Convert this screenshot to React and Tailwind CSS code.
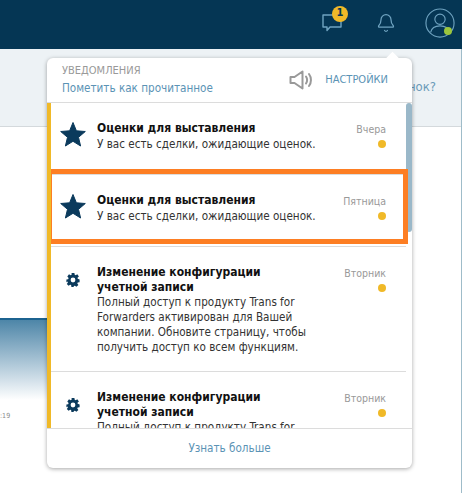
import { Bell } from 'lucide-react';

const items = [
  { id: 1, kind: 'star', title: 'Оценки для выставления', body: 'У вас есть сделки, ожидающие оценок.', date: 'Вчера' },
  { id: 2, kind: 'star', title: 'Оценки для выставления', body: 'У вас есть сделки, ожидающие оценок.', date: 'Пятница' },
  {
    id: 3,
    kind: 'gear',
    title: 'Изменение конфигурации учетной записи',
    body: 'Полный доступ к продукту Trans for Forwarders активирован для Вашей компании. Обновите страницу, чтобы получить доступ ко всем функциям.',
    date: 'Вторник',
  },
  {
    id: 4,
    kind: 'gear',
    title: 'Изменение конфигурации учетной записи',
    body: 'Полный доступ к продукту Trans for Forwarders активирован для Вашей компании. Обновите страницу, чтобы получить доступ ко всем функциям.',
    date: 'Вторник',
  },
];

const StarIcon = () => (
  <svg viewBox="0 0 26 25" className="h-[25px] w-[26px]">
    <path d="M13 0.5l3.4 8.3 8.9.7-6.8 5.8 2.1 8.7L13 19.3l-7.6 4.7 2.1-8.7L.7 9.5l8.9-.7z" fill="#0b3a5c" stroke="#0b3a5c" strokeLinejoin="round" />
  </svg>
);

const GearIcon = () => (
  <svg viewBox="0 0 14 14" className="h-[14px] w-[14px]">
    <path
      fillRule="evenodd"
      fill="#0b3a5c"
      d="M5.6 0h2.8l.3 1.8 1 .5L11.3 1.2l1.600 2.300-1.400 1.200.2 1.100L13.600 6.500v2.800l-1.900.2-.4 1 1.100 1.500-2 1.800-1.500-1.100-1 .4L7.600 14H5.400l-.3-1.900-1-.4-1.500 1.100-1.800-1.800 1.100-1.500-.4-1L.4 9.300V6.500l1.800-.3.4-1.100L1.300 3.500 3 1.300l1.600 1 1-.5zM7 4.600a2.400 2.400 0 1 0 0 4.800 2.400 2.400 0 0 0 0-4.800z"
    />
  </svg>
);

const NotificationRow = ({ item, last }) => (
  <div className={`flex pr-5 ${last ? '' : 'border-b border-[#dcdcdc]'} ${item.kind === 'star' ? 'h-[72px]' : 'h-[125px]'}`}>
    <div className={`flex w-[44px] shrink-0 justify-center ${item.kind === 'star' ? 'pt-[19px]' : 'pt-[26px]'}`}>
      {item.kind === 'star' ? <StarIcon /> : <GearIcon />}
    </div>
    <div className="ml-[2px] w-[222px] shrink-0 pt-[18px] text-[11.6px] leading-[15px] text-[#333]">
      <div className="max-w-[200px] text-[12px] font-bold text-[#111]">{item.title}</div>
      <div className={item.kind === 'star' ? 'mt-px' : ''}>{item.body}</div>
    </div>
    <div className="flex flex-1 flex-col items-end pt-[19px] text-[10.5px] leading-[15px] text-[#999]">
      <span>{item.date}</span>
      <span className="mt-[3px] h-2 w-2 rounded-full bg-[#f0b928]" />
    </div>
  </div>
);

export default function App() {
  return (
    <div className="relative h-[493px] w-[462px] overflow-hidden bg-white font-['DejaVu_Sans_Condensed','DejaVu_Sans',sans-serif]">
      {/* Header */}
      <header className="flex h-[49px] items-center justify-end bg-[#053654] pb-[4px] pr-[7px]">
        <div className="relative mr-[34px]">
          <svg viewBox="0 0 20 18" className="h-[18px] w-5" fill="none" stroke="#6fa3c0" strokeWidth="1.4" strokeLinejoin="round">
            <path d="M1 1h18v12H8l-3 3.500V13H1z" />
          </svg>
          <span className="absolute -right-[6px] -top-[8px] flex h-4 w-4 items-center justify-center rounded-full bg-[#f0b928] text-[11px] font-bold text-[#053654]">
            1
          </span>
        </div>
        <Bell size={20} strokeWidth={1.5} className="mr-[29px] text-[#6fa3c0]" />
        <div className="relative">
          <svg viewBox="0 0 32 32" className="h-[30px] w-[30px]" fill="none" stroke="#6fa3c0" strokeWidth="1.2">
            <circle cx="16" cy="16" r="15" />
            <circle cx="16" cy="12" r="5.500" />
            <path d="M6 26c1-5 5-7 10-7s9 2 10 7" />
          </svg>
          <span className="absolute bottom-[3px] right-[3px] h-2 w-2 rounded-full bg-[#9bc53d]" />
        </div>
      </header>

      {/* Page behind the popup */}
      <div className="flex h-[78px] items-center justify-end border-b border-[#d4d9dc] bg-[#edf2f5] pb-[2px] pr-[26px] text-[13px] text-[#6a9ab8]">
        нок?
      </div>
      <div className="mt-[191px] h-[82px] w-[200px] border-t-2 border-[#1c6390] bg-gradient-to-b from-[#4d86a8] to-white" />
      <div className="mt-[12px] text-[7px] leading-[9px] text-[#888]">:19</div>
      <div className="absolute bottom-0 right-0 top-[49px] w-px bg-[#9fbcc9]" />

      {/* Popup */}
      <div className="absolute left-[47px] top-[58px] w-[365px] rounded-md bg-white shadow-[0_1px_4px_rgba(0,0,0,0.35)]">
        <div className="absolute -top-[4px] right-[14px] h-[11px] w-[11px] rotate-45 bg-white" />

        <div className="relative flex h-[45px] items-center border-b border-[#dcdcdc] pl-[15px] pr-[24px]">
          <div className="flex-1">
            <div className="text-[11px] leading-[14px] text-[#999]">УВЕДОМЛЕНИЯ</div>
            <div className="mt-[3px] text-[11.6px] leading-[15px] text-[#5b93b5]">Пометить как прочитанное</div>
          </div>
          <svg viewBox="0 0 24 20" className="mr-[12px] h-5 w-6" fill="none" stroke="#999" strokeWidth="2" strokeLinejoin="round" strokeLinecap="round">
            <path d="M1.500 7v6h4l8 5.500V1.500L5.500 7z" />
            <path d="M17 6.500c1.300 2 1.300 5 0 7" />
            <path d="M20 4c2.600 3.500 2.600 8.500 0 12" />
          </svg>
          <span className="text-[11px] text-[#5b93b5]">НАСТРОЙКИ</span>
        </div>

        <div className="relative h-[325px] overflow-hidden border-l-4 border-[#f0b928]">
          <div className="w-[355px]">
            {items.map((item, i) => (
              <NotificationRow key={item.id} item={item} last={i === items.length - 1} />
            ))}
          </div>
          {/* Scrollbar */}
          <div className="absolute right-0 top-0 h-[129px] w-[6px] rounded-full bg-[#9ab8c9]" />
          {/* Orange highlight */}
          <div className="absolute -left-1 top-[66px] h-[75px] w-[361px] border-[5px] border-[#fd7e23]" />
        </div>

        <div className="flex h-[40px] items-center justify-center rounded-b-md border-t border-[#dcdcdc] text-[11.6px] text-[#5b93b5]">
          Узнать больше
        </div>
      </div>
    </div>
  );
}
